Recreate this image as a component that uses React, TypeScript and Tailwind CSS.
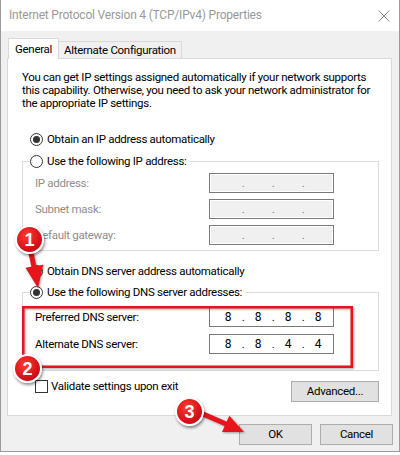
import React from 'react';

const FONT = "font-['Segoe_UI',Roboto,'Liberation_Sans',sans-serif] text-[11.5px] tracking-[-0.3px]";

function Radio({ checked }: { checked?: boolean }) {
  return (
    <span className="flex h-[13px] w-[13px] shrink-0 items-center justify-center rounded-full border border-[#333] bg-white">
      {checked && <span className="h-[7px] w-[7px] rounded-full bg-[#333]" />}
    </span>
  );
}

function IpBox({ octets, disabled }: { octets?: string[]; disabled?: boolean }) {
  const vals = octets ?? ['', '', '', ''];
  return (
    <div
      className={`flex h-[20px] w-[125px] items-center border border-[#7a7a7a] pl-[7px] ${
        disabled ? 'bg-[#f0f0f0] shadow-[inset_0_0_0_1px_#fff]' : 'bg-white'
      }`}
    >
      {vals.map((v, i) => (
        <React.Fragment key={i}>
          <span className="w-[22px] text-center text-[12px] tracking-normal text-black">{v}</span>
          {i < 3 && (
            <span className={`w-[8px] text-center ${disabled ? 'text-[#777]' : 'text-black'}`}>.</span>
          )}
        </React.Fragment>
      ))}
    </div>
  );
}

function Row({ label, disabled, octets }: { label: string; disabled?: boolean; octets?: string[] }) {
  return (
    <div className="flex items-center">
      <span className={`w-[186px] shrink-0 pl-[12px] ${disabled ? 'text-[#8d8d8d]' : 'text-black'}`}>{label}</span>
      <IpBox disabled={disabled} octets={octets} />
    </div>
  );
}

function Badge({ n, className }: { n: string; className: string }) {
  return (
    <div
      className={`absolute flex h-[29px] w-[29px] items-center justify-center rounded-full border-2 border-white bg-[radial-gradient(circle_at_40%_35%,#ff3b30,#d4121a_60%,#a80b10)] shadow-[1px_2px_3px_rgba(0,0,0,0.45)] ${className}`}
    >
      <span className="font-['Liberation_Sans',Arial,sans-serif] text-[18px] font-bold leading-none tracking-normal text-white">{n}</span>
    </div>
  );
}

export default function App() {
  return (
    <div className={`relative h-[455px] w-[400px] overflow-hidden bg-white ${FONT} leading-[13px] text-black`}>
      <div className="flex h-[452px] flex-col border-x border-b border-[#9a9a9a] bg-[#f0f0f0]">
        {/* title bar */}
        <div className="flex h-[31px] shrink-0 items-center justify-between bg-white pl-[8px] pr-[8px]">
          <span className="text-[12px] tracking-[-0.2px] text-[#999]">Internet Protocol Version 4 (TCP/IPv4) Properties</span>
          <svg width="12" height="12" viewBox="0 0 12 12" className="mr-[1px]">
            <path d="M0.5 0.5 L11.5 11.5 M11.5 0.5 L0.5 11.5" stroke="#8a8a8a" strokeWidth="1" />
          </svg>
        </div>

        <div className="pl-[6px] pr-[7px] pt-[7px]">
          {/* tabs */}
          <div className="flex items-end pl-[1px]">
            <div className="relative z-10 -mb-px flex h-[21px] items-center border-x border-t border-[#d9d9d9] bg-white px-[6px]">
              General
            </div>
            <div className="flex h-[17px] items-center border-r border-t border-[#d9d9d9] px-[5px] pt-[1px]">
              Alternate Configuration
            </div>
          </div>

          {/* panel */}
          <div className="h-[358px] border border-[#d9d9d9] bg-white pl-[14px] pr-[12px] pt-[12px]">
            <p className="leading-[13px]">
              You can get IP settings assigned automatically if your network supports this capability. Otherwise, you
              need to ask your network administrator for the appropriate IP settings.
            </p>

            <div className="ml-[8px] mt-[21px] flex h-[16px] items-center gap-[4px]">
              <Radio checked />
              <span>Obtain an IP address automatically</span>
            </div>

            <fieldset className="mt-[6px] border border-[#dcdcdc] pb-[5px] pt-[4px]">
              <legend className="ml-[7px] pr-[3px]">
                <div className="flex h-[16px] items-center gap-[4px]">
                  <Radio />
                  <span>Use the following IP address:</span>
                </div>
              </legend>
              <div className="flex flex-col gap-[6px]">
                <Row label="IP address:" disabled />
                <Row label="Subnet mask:" disabled />
                <Row label="Default gateway:" disabled />
              </div>
            </fieldset>

            <div className="ml-[8px] mt-[12px] flex h-[16px] items-center gap-[4px]">
              <Radio />
              <span>Obtain DNS server address automatically</span>
            </div>

            <fieldset className="mt-[5px] border border-[#dcdcdc] pb-[16px] pt-[7px]">
              <legend className="ml-[7px] pr-[3px]">
                <div className="flex h-[16px] items-center gap-[4px]">
                  <Radio checked />
                  <span>Use the following DNS server addresses:</span>
                </div>
              </legend>
              <div className="flex flex-col gap-[7px]">
                <Row label="Preferred DNS server:" octets={['8', '8', '8', '8']} />
                <Row label="Alternate DNS server:" octets={['8', '8', '4', '4']} />
              </div>
            </fieldset>

            <div className="mt-[9px] flex items-start justify-between">
              <div className="ml-[13px] flex items-center gap-[3px]">
                <span className="h-[13px] w-[13px] border border-[#333] bg-white" />
                <span>Validate settings upon exit</span>
              </div>
              <button className="mt-[1px] h-[21px] w-[88px] border border-[#adadad] bg-[#e1e1e1]">Advanced...</button>
            </div>
          </div>
        </div>

        {/* dialog buttons */}
        <div className="mt-[8px] flex justify-end gap-[8px] pr-[6px]">
          <button className="h-[21px] w-[73px] border border-[#adadad] bg-[#e1e1e1]">OK</button>
          <button className="h-[21px] w-[73px] border border-[#adadad] bg-[#e1e1e1]">Cancel</button>
        </div>
      </div>

      {/* annotations */}
      <svg className="pointer-events-none absolute left-0 top-0 drop-shadow-[1px_1px_1px_rgba(0,0,0,0.35)]" width="400" height="455">
        <rect x="23.25" y="307.25" width="328.5" height="59.5" fill="none" stroke="#e8141b" strokeWidth="2.5" />
        <path d="M31 253 L34 267" stroke="#e8141b" strokeWidth="5" strokeLinecap="round" />
        <polygon points="25.4,267.8 43.2,264.8 38,288" fill="#e8141b" />
        <path d="M203 414 L226 424" stroke="#e8141b" strokeWidth="5" strokeLinecap="round" />
        <polygon points="222,432 229.3,415.8 244,432" fill="#e8141b" />
      </svg>
      <Badge n="1" className="left-[15px] top-[225px]" />
      <Badge n="2" className="left-[13px] top-[354px]" />
      <Badge n="3" className="left-[175px] top-[397px]" />
    </div>
  );
}
